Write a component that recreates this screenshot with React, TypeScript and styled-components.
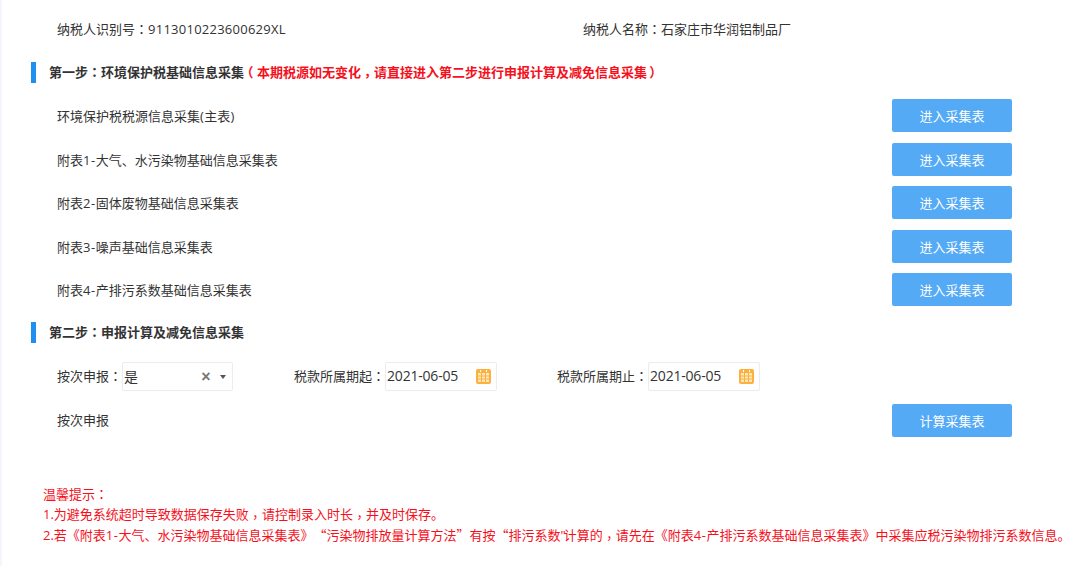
import React from 'react';
import styled, { createGlobalStyle } from 'styled-components';

const GlobalStyle = createGlobalStyle`
  html, body {
    margin: 0;
    padding: 0;
    background: #fff;
  }
  body {
    font-family: "Open Sans", "Noto Sans CJK SC", sans-serif;
    font-size: 13px;
    color: #333;
    text-spacing-trim: space-all;
  }
`;

const Page = styled.div`
  box-sizing: border-box;
  width: 1080px;
  height: 566px;
  overflow: hidden;
  padding-top: 19px;
  border-left: 2px solid #f5f5fc;
`;

const Info = styled.div`
  display: grid;
  grid-template-columns: 526px auto;
  height: 20px;
  line-height: 20px;
  padding-left: 55px;
`;

const Serial = styled.span`
  letter-spacing: 0.25px;
`;

// the reference centres full-width punctuation in its cell, as the TC font does
const Mark = styled.span<{ $x?: number; $y?: number }>`
  display: inline-block;
  font-family: "Noto Sans CJK TC", sans-serif;
  transform: translate(${(p) => p.$x ?? 0}em, ${(p) => p.$y ?? 0}em);
`;

const Quote = styled.span`
  font-family: "Noto Sans CJK SC", sans-serif;
`;

const Wide = styled.span<{ $spread: number }>`
  letter-spacing: ${(p) => p.$spread}px;
`;

const StepTitle = styled.h2<{ $top: number }>`
  margin: ${(p) => p.$top}px 0 0 29px;
  height: 21px;
  line-height: 20px;
  padding-left: 13px;
  border-left: 5px solid #1e90f0;
  font-size: 13px;
  font-weight: 700;
  color: #333;
`;

const Warn = styled.span`
  color: #f5101c;
`;

const RowList = styled.div`
  display: flex;
  flex-direction: column;
  gap: 10.5px;
  margin-top: 16px;
`;

const Row = styled.div<{ $top?: number }>`
  display: flex;
  align-items: center;
  justify-content: space-between;
  height: 33px;
  margin-top: ${(p) => p.$top ?? 0}px;
  padding: 0 68px 0 55px;
`;

const EnterButton = styled.button`
  width: 120px;
  height: 33px;
  padding: 0;
  border: 0;
  border-radius: 2px;
  background: #55aaf5;
  color: #fff;
  font: inherit;
  cursor: pointer;
`;

const FormRow = styled.div`
  display: grid;
  grid-template-columns: 237px 263px auto;
  height: 29px;
  margin-top: 19px;
  padding-left: 55px;
`;

const Field = styled.div`
  display: flex;
  align-items: center;
`;

const FieldLabel = styled.span`
  margin-top: -2px;
`;

const Control = styled.div<{ $width: number }>`
  box-sizing: border-box;
  display: flex;
  align-items: center;
  width: ${(p) => p.$width}px;
  height: 29px;
  padding: 0 5px 0 1px;
  border: 1px solid #ececec;
  border-radius: 2px;
  background: #fff;
  font-size: 14px;
`;

const Value = styled.span`
  flex: 1;
  margin-top: -2px;
  letter-spacing: -0.2px;
  white-space: nowrap;
`;

const Clear = styled.span`
  width: 14px;
  text-align: center;
  font-size: 16px;
  font-weight: 700;
  color: #777;
  font-family: "Liberation Sans", sans-serif;
`;

const Arrow = styled.span`
  width: 0;
  height: 0;
  margin: 0 1.5px 0 6.5px;
  border-left: 3.5px solid transparent;
  border-right: 3.5px solid transparent;
  border-top: 4px solid #555;
`;

const Tips = styled.div`
  margin: 47px 0 0 41px;
  color: #f5101c;
  line-height: 20.3px;
  white-space: nowrap;
`;

const CalendarIcon = () => (
  <svg width="15" height="15" viewBox="0 0 15 15" aria-hidden="true">
    <rect width="15" height="15" rx="2" fill="#fdb03c" />
    <rect x="2" y="4" width="11" height="9" fill="#fde9bf" />
    <path d="M2 7h11M2 10h11M5.5 4v9M9.5 4v9" stroke="#fdb03c" strokeWidth="1" />
    <path d="M4.5 1v2M10.5 1v2" stroke="#fff" strokeWidth="1" />
  </svg>
);

// splits a line so punctuation, quotes and short latin runs get their own part
const Line = ({ text }: { text: string }) => (
  <>
    {text.split(/([，：（）“”"]|\d-|\(|\))/).map((part, i) => {
      if (part === '，') return <Mark key={i} $y={0.22}>{part}</Mark>;
      if (part === '（') return <Mark key={i} $x={-0.28}>{part}</Mark>;
      if (part === '）') return <Mark key={i} $x={0.16}>{part}</Mark>;
      if (part === '：') return <Mark key={i}>{part}</Mark>;
      if (part === '“' || part === '”') return <Quote key={i}>{part}</Quote>;
      if (part === '"') return <Wide key={i} $spread={-2}>{part}</Wide>;
      if (/^\d-$/.test(part) || part === '(' || part === ')') {
        return <Wide key={i} $spread={0.5}>{part}</Wide>;
      }
      return part;
    })}
  </>
);

const tables = [
  '环境保护税税源信息采集(主表)',
  '附表1-大气、水污染物基础信息采集表',
  '附表2-固体废物基础信息采集表',
  '附表3-噪声基础信息采集表',
  '附表4-产排污系数基础信息采集表',
];

export default function App() {
  return (
    <Page>
      <GlobalStyle />
      <Info>
        <span>
          <Line text="纳税人识别号：" />
          <Serial>9113010223600629XL</Serial>
        </span>
        <span>
          <Line text="纳税人名称：石家庄市华润铝制品厂" />
        </span>
      </Info>

      <StepTitle $top={23}>
        <Line text="第一步：环境保护税基础信息采集" />
        <Warn>
          <Line text="（本期税源如无变化，请直接进入第二步进行申报计算及减免信息采集）" />
        </Warn>
      </StepTitle>
      <RowList>
        {tables.map((name) => (
          <Row key={name}>
            <span>
              <Line text={name} />
            </span>
            <EnterButton>进入采集表</EnterButton>
          </Row>
        ))}
      </RowList>

      <StepTitle $top={16}>
        <Line text="第二步：申报计算及减免信息采集" />
      </StepTitle>
      <FormRow>
        <Field>
          <FieldLabel>
            <Line text="按次申报：" />
          </FieldLabel>
          <Control $width={111}>
            <Value>是</Value>
            <Clear>×</Clear>
            <Arrow />
          </Control>
        </Field>
        <Field>
          <FieldLabel>
            <Line text="税款所属期起：" />
          </FieldLabel>
          <Control $width={112}>
            <Value>2021-06-05</Value>
            <CalendarIcon />
          </Control>
        </Field>
        <Field>
          <FieldLabel>
            <Line text="税款所属期止：" />
          </FieldLabel>
          <Control $width={112}>
            <Value>2021-06-05</Value>
            <CalendarIcon />
          </Control>
        </Field>
      </FormRow>
      <Row $top={13}>
        <FieldLabel>按次申报</FieldLabel>
        <EnterButton>计算采集表</EnterButton>
      </Row>

      <Tips>
        <div>
          <Line text="温馨提示：" />
        </div>
        <div>
          <Line text="1.为避免系统超时导致数据保存失败，请控制录入时长，并及时保存。" />
        </div>
        <div>
          <Line text='2.若《附表1-大气、水污染物基础信息采集表》“污染物排放量计算方法”有按“排污系数"计算的，请先在《附表4-产排污系数基础信息采集表》中采集应税污染物排污系数信息。' />
        </div>
      </Tips>
    </Page>
  );
}
